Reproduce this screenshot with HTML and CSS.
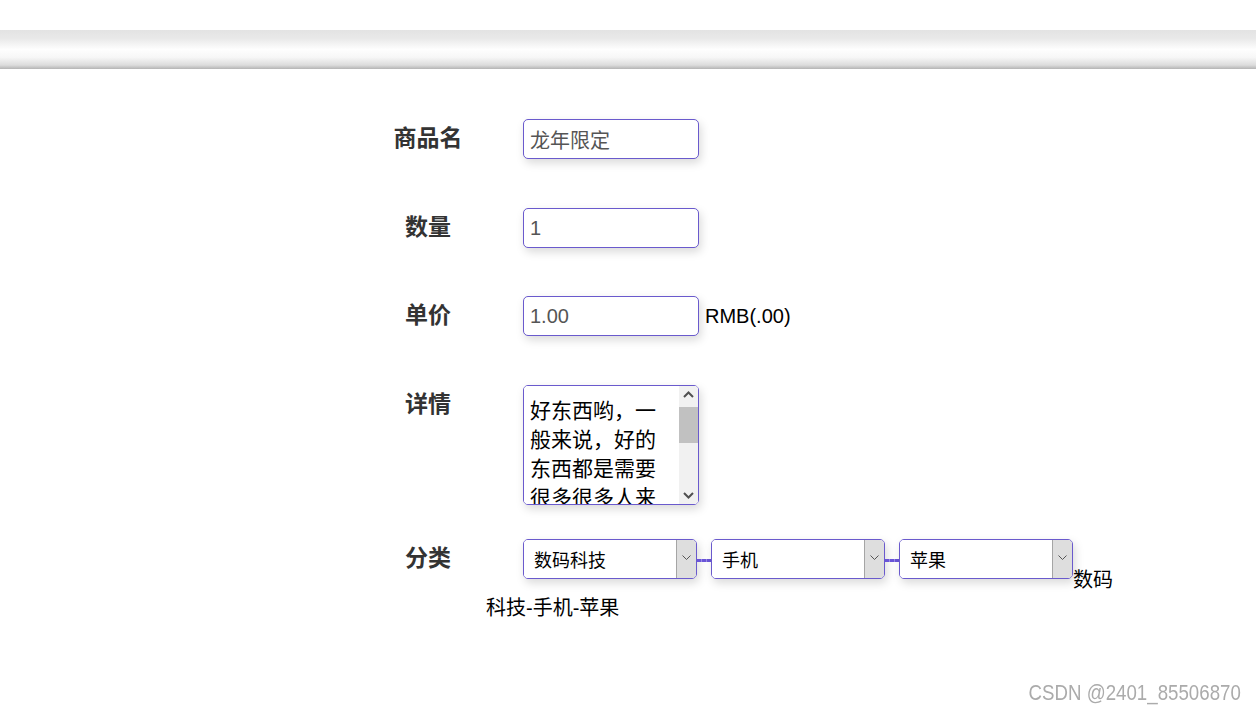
FILE: index.html
```html
<!DOCTYPE html>
<html lang="zh-CN">
<head>
    <meta charset="UTF-8">
    <meta name="viewport" content="width=device-width, initial-scale=1.0">
    <title>添加商品</title>
    <link rel="stylesheet" href="styles.css">
</head>
<body>
    <div class="top-bar"></div>

    <form class="goods-form">
        <div class="row">
            <label class="row-label" for="nameInput">商品名</label>
            <div class="row-field">
                <input type="text" id="nameInput" class="text-input" value="龙年限定">
            </div>
        </div>

        <div class="row row-short">
            <label class="row-label" for="countInput">数量</label>
            <div class="row-field">
                <input type="text" id="countInput" class="text-input" value="1">
            </div>
        </div>

        <div class="row">
            <label class="row-label" for="priceInput">单价</label>
            <div class="row-field">
                <input type="text" id="priceInput" class="text-input" value="1.00">
                <span class="unit">RMB(.00)</span>
            </div>
        </div>

        <div class="row row-detail">
            <label class="row-label" for="detailInput">详情</label>
            <div class="row-field">
                <div class="textarea-box">
                    <textarea id="detailInput" class="detail-text">好东西哟，一般来说，好的东西都是需要很多很多人来认可的，所以快来买吧</textarea>
                    <!-- scrollbar drawn by hand so it looks the same everywhere -->
                    <div class="fake-scroll">
                        <span class="scroll-btn">
                            <svg width="19" height="19" viewBox="0 0 19 19"><polyline points="5,11 9.5,6.5 14,11" fill="none" stroke="#505050" stroke-width="2"/></svg>
                        </span>
                        <span class="scroll-thumb"></span>
                        <span class="scroll-gap"></span>
                        <span class="scroll-btn">
                            <svg width="19" height="19" viewBox="0 0 19 19"><polyline points="5,8 9.5,12.5 14,8" fill="none" stroke="#505050" stroke-width="2"/></svg>
                        </span>
                    </div>
                </div>
            </div>
        </div>

        <div class="row">
            <label class="row-label">分类</label>
            <div class="row-field category-field">
                <span class="select-box first-select">
                    <select class="cat-select"><option>数码科技</option></select>
                    <span class="select-btn"><svg width="9" height="6" viewBox="0 0 9 6"><polyline points="0.5,0.5 4.5,4.5 8.5,0.5" fill="none" stroke="#555" stroke-width="1"/></svg></span>
                </span><span class="link-line"></span><span class="select-box">
                    <select class="cat-select"><option>手机</option></select>
                    <span class="select-btn"><svg width="9" height="6" viewBox="0 0 9 6"><polyline points="0.5,0.5 4.5,4.5 8.5,0.5" fill="none" stroke="#555" stroke-width="1"/></svg></span>
                </span><span class="link-line"></span><span class="select-box">
                    <select class="cat-select"><option>苹果</option></select>
                    <span class="select-btn"><svg width="9" height="6" viewBox="0 0 9 6"><polyline points="0.5,0.5 4.5,4.5 8.5,0.5" fill="none" stroke="#555" stroke-width="1"/></svg></span>
                </span>数码科技-手机-苹果
            </div>
        </div>

        <div class="row">
            <span></span>
            <div class="row-field">
                <div class="submit-box"></div>
            </div>
        </div>
    </form>

    <div class="watermark">CSDN @2401_85506870</div>
</body>
</html>
```

FILE: styles.css
```css
body {
    margin: 0;
    background-color: #ffffff;
    color: #000;
    font-family: "Liberation Sans", "Noto Sans CJK SC", sans-serif;
    font-size: 20px;
}

.top-bar {
    margin-top: 30px;
    height: 39px;
    background: linear-gradient(#e3e3e3 0%, #e9e9e9 22%, #fefefe 50%, #f7f7f7 70%, #dcdcdc 90%, #b4b4b4 100%);
}

.goods-form {
    margin: 50px 0 0 380px;
    width: 742px;
}

.row {
    display: grid;
    grid-template-columns: 96px 636px;
    column-gap: 10px;
    align-items: start;
    margin-bottom: 49px;
}

.row-short {
    margin-bottom: 48px;
}

.row-detail {
    margin-bottom: 34px;
}

.row-label {
    text-align: center;
    font-family: "Noto Sans CJK SC", sans-serif;
    font-weight: bold;
    font-size: 23px;
    line-height: 34px;
    color: #333;
}

.row-field {
    display: flex;
    align-items: center;
}

.text-input {
    box-sizing: border-box;
    width: 176px;
    height: 40px;
    margin: 0 0 0 37px;
    padding: 0 6px;
    border: 1px solid #6a5acd;
    border-radius: 5px;
    box-shadow: 2px 4px 10px rgba(0, 0, 0, 0.15);
    font-family: "Liberation Sans", "Noto Sans CJK SC", sans-serif;
    font-size: 20px;
    color: #555;
    outline: none;
}

.unit {
    margin-left: 6px;
}

/* 详情 */
.textarea-box {
    position: relative;
    box-sizing: border-box;
    width: 176px;
    height: 120px;
    margin-left: 37px;
    border: 1px solid #6a5acd;
    border-radius: 5px;
    overflow: hidden;
    box-shadow: 2px 4px 10px rgba(0, 0, 0, 0.15);
}

.detail-text {
    display: block;
    box-sizing: border-box;
    width: 100%;
    height: 100%;
    margin: 0;
    padding: 9px 25px 0 6px;
    border: none;
    resize: none;
    overflow: hidden;
    outline: none;
    font-family: "Noto Sans CJK SC", sans-serif;
    font-size: 21px;
    line-height: 29px;
    color: #000;
}

.fake-scroll {
    position: absolute;
    top: 0;
    right: 0;
    bottom: 0;
    width: 19px;
    display: flex;
    flex-direction: column;
    background-color: #f1f1f1;
}

.scroll-btn {
    height: 19px;
    display: block;
}

.scroll-btn svg {
    display: block;
}

.scroll-thumb {
    height: 36px;
    margin-top: 2px;
    background-color: #c1c1c1;
}

.scroll-gap {
    flex: 1;
}

/* 分类 */
.category-field {
    display: block;
    line-height: 28px;
}

.select-box {
    display: inline-flex;
    box-sizing: border-box;
    width: 174px;
    height: 40px;
    vertical-align: 20px;
    border: 1px solid #6a5acd;
    border-radius: 5px;
    overflow: hidden;
    box-shadow: 2px 4px 10px rgba(0, 0, 0, 0.15);
}

.first-select {
    margin-left: 37px;
}

.cat-select {
    flex: 1;
    min-width: 0;
    appearance: none;
    -webkit-appearance: none;
    border: none;
    background: #fff;
    padding: 0 0 0 10px;
    font-family: "Noto Sans CJK SC", sans-serif;
    font-size: 18px;
    color: #000;
    outline: none;
}

.select-btn {
    width: 20px;
    display: flex;
    justify-content: center;
    align-items: flex-start;
    padding-top: 15px;
    box-sizing: border-box;
    background-color: #dedede;
    border-left: 1px solid #a5a5a5;
}

.link-line {
    display: inline-block;
    width: 14px;
    height: 3px;
    vertical-align: 25px;
    background: repeating-linear-gradient(90deg, #6a55d8 0, #6a55d8 4px, #9a8ce6 4px, #9a8ce6 5px);
}

.submit-box {
    margin: 55px 0 0 79px;
    width: 225px;
    height: 40px;
    border-radius: 5px;
    background-color: #fff;
    box-shadow: 0 0 12px rgba(0, 0, 0, 0.06);
}

.watermark {
    position: fixed;
    right: 15px;
    bottom: 8px;
    font-family: "Liberation Sans", sans-serif;
    font-size: 22px;
    color: #ababab;
    transform: scaleX(0.85);
    transform-origin: right bottom;
}
```
